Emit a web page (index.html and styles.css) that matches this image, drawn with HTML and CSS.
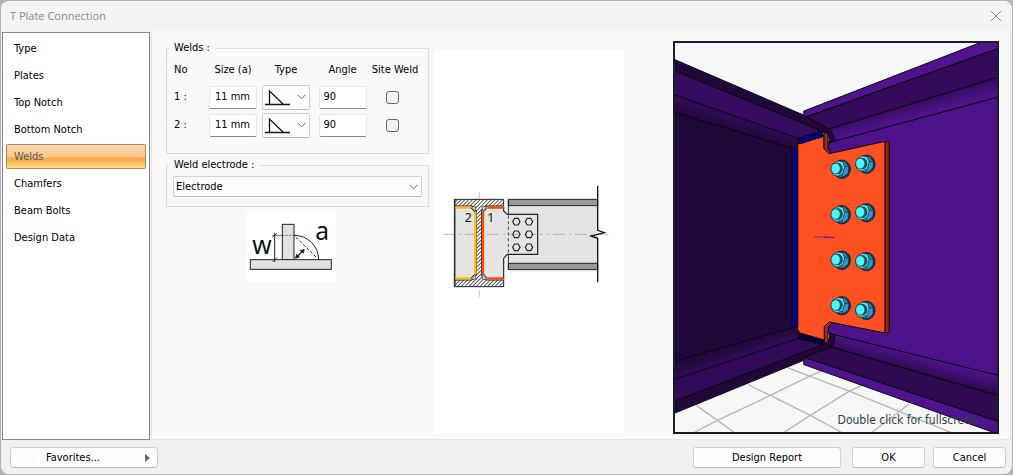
FILE: index.html
```html
<!DOCTYPE html>
<html lang="en">
<head>
<meta charset="utf-8">
<title>T Plate Connection</title>
<link rel="stylesheet" href="styles.css">
</head>
<body>
<div class="dialog">
  <header class="titlebar">
    <h1 class="title">T Plate Connection</h1>
    <button class="close" type="button" aria-label="Close">
      <svg width="12" height="12" viewBox="0 0 12 12"><path d="M1 1L11 11M11 1L1 11"/></svg>
    </button>
  </header>
  <div class="main">
    <nav class="sidebar">
      <button class="tab" type="button">Type</button>
      <button class="tab" type="button">Plates</button>
      <button class="tab" type="button">Top Notch</button>
      <button class="tab" type="button">Bottom Notch</button>
      <button class="tab tab-active" type="button" aria-current="page">Welds</button>
      <button class="tab" type="button">Chamfers</button>
      <button class="tab" type="button">Beam Bolts</button>
      <button class="tab" type="button">Design Data</button>
    </nav>
    <main class="panel">
      <form class="form">
        <fieldset class="group group-welds">
          <legend>Welds :</legend>
          <table class="welds">
            <colgroup><col class="c-no"><col class="c-size"><col class="c-type"><col class="c-angle"><col class="c-site"></colgroup>
            <thead>
              <tr><th class="left">No</th><th>Size (a)</th><th>Type</th><th>Angle</th><th>Site Weld</th></tr>
            </thead>
            <tbody>
              <tr>
                <td class="left">1 :</td>
                <td><input class="field size" type="text" value="11 mm" aria-label="Weld 1 size"></td>
                <td><div class="pick">
                  <select aria-label="Weld 1 type"><option label=" "></option></select>
                  <svg class="weld-icon" width="26" height="18" viewBox="0 0 26 18"><path d="M0 16.500H25M4.500 17V3L18 16"/></svg>
                  <svg class="chevron" width="9" height="6" viewBox="0 0 9 6"><path d="M.5 .8L4.500 4.800L8.500 .8"/></svg>
                </div></td>
                <td><input class="field" type="text" value="90" aria-label="Weld 1 angle"></td>
                <td><input class="check" type="checkbox" aria-label="Weld 1 site weld"></td>
              </tr>
              <tr>
                <td class="left">2 :</td>
                <td><input class="field size" type="text" value="11 mm" aria-label="Weld 2 size"></td>
                <td><div class="pick">
                  <select aria-label="Weld 2 type"><option label=" "></option></select>
                  <svg class="weld-icon" width="26" height="18" viewBox="0 0 26 18"><path d="M0 16.500H25M4.500 17V3L18 16"/></svg>
                  <svg class="chevron" width="9" height="6" viewBox="0 0 9 6"><path d="M.5 .8L4.500 4.800L8.500 .8"/></svg>
                </div></td>
                <td><input class="field" type="text" value="90" aria-label="Weld 2 angle"></td>
                <td><input class="check" type="checkbox" aria-label="Weld 2 site weld"></td>
              </tr>
            </tbody>
          </table>
        </fieldset>
        <fieldset class="group">
          <legend>Weld electrode :</legend>
          <div class="pick pick-wide">
            <select aria-label="Weld electrode"><option>Electrode</option></select>
            <svg class="chevron" width="9" height="6" viewBox="0 0 9 6"><path d="M.5 .8L4.500 4.800L8.500 .8"/></svg>
          </div>
        </fieldset>
        <svg class="throat" width="90" height="70" viewBox="15 21 270 210">
          <rect x="15" y="21" width="270" height="210" fill="#fff"/>
          <g fill="#e2e2e2" stroke="#222" stroke-width="3">
            <rect x="124" y="58" width="35" height="106"/>
            <rect x="28" y="164" width="243" height="29"/>
          </g>
          <g fill="none" stroke="#222" stroke-width="3">
            <path d="M159 91A73 73 0 0 1 233 164"/>
            <path d="M165 97L229 160" stroke-dasharray="9 6"/>
            <path d="M164 159L189 134" stroke-width="4"/>
            <path d="M101 84V171M95 97L107 85M95 170L107 158"/>
            <path d="M93 91H124" stroke-width="2"/>
            <path d="M124 91H159" stroke-width="2" stroke-dasharray="6 4"/>
          </g>
          <path d="M162 161L166 146L177 157ZM191 132L187 147L176 136Z" fill="#222"/>
          <text x="34" y="146" font-size="74">w</text>
          <text x="223" y="104" font-size="74">a</text>
        </svg>
      </form>
      <div class="plan">
        <svg width="190" height="384" viewBox="-3 -390 570 1152">
          <defs>
            <pattern id="hatch" width="8" height="8" patternUnits="userSpaceOnUse" patternTransform="rotate(45)">
              <rect width="8" height="8" fill="#fff"/><path d="M1 0V8" stroke="#222" stroke-width="2.500"/>
            </pattern>
          </defs>
          <path d="M133 36V356" stroke="#aaa" stroke-width="2" stroke-dasharray="22 8 4 8"/>
          <rect x="59" y="78" width="147" height="222" fill="#e4e4e4"/>
          <rect x="220" y="58" width="268" height="211" fill="#e4e4e4"/>
          <path d="M220 58H488V77H220ZM220 250H488V269H220Z" fill="#999" stroke="#222" stroke-width="3"/>
          <path d="M220 58V103M220 223V269" stroke="#222" stroke-width="3"/>
          <path d="M206 82V93L217 103H308V223H217L206 235V297L140 297V82Z" fill="#e4e4e4"/>
          <path d="M206 80V93L217 103H308V223H217L206 235V298" fill="none" stroke="#222" stroke-width="3.500"/>
          <path d="M220 106V222" stroke="#333" stroke-width="2.500" stroke-dasharray="10 7"/>
          <path d="M24 163H520" stroke="#999" stroke-width="2" stroke-dasharray="36 12 6 12"/>
          <path d="M59 58H206V78H152L140 92V286L152 300H206V320H59V300H112L124 286V92L112 78H59Z" fill="url(#hatch)" stroke="#222" stroke-width="3"/>
          <path d="M109 80L122 94V80ZM142 80V94L156 80ZM109 298L122 284V298ZM142 298V284L156 298Z" fill="#e4e4e4" stroke="#222" stroke-width="2"/>
          <path d="M59 58V320" stroke="#333" stroke-width="5"/>
          <path d="M107 83L121 97M121 281L107 295M158 83L144 97M144 281L158 295" fill="none" stroke="#222" stroke-width="3"/>
          <path d="M61 83H107M121 96V283M61 295H107" stroke="#ffc000" stroke-width="7"/>
          <path d="M206 83H158M144 96V283M158 295H206" stroke="#ff4b00" stroke-width="7"/>
          <g fill="none" stroke="#222" stroke-width="3.500">
            <path id="hex" d="M233 125L238.500 115H249.500L255 125L249.500 135H238.500Z"/>
            <use href="#hex" x="38"/><use href="#hex" y="38"/><use href="#hex" x="38" y="38"/><use href="#hex" y="77"/><use href="#hex" x="38" y="77"/>
          </g>
          <path d="M488 18V151L508 158L468 168L488 175V307" fill="none" stroke="#111" stroke-width="4"/>
          <text x="89" y="126" font-size="37">2</text>
          <text x="157" y="126" font-size="37">1</text>
        </svg>
      </div>
      <div class="view">
        <svg class="scene" viewBox="15 22 970 1171" preserveAspectRatio="xMidYMid slice">
          <defs>
            <linearGradient id="gTL" gradientUnits="userSpaceOnUse" x1="200" y1="235" x2="184" y2="288"><stop offset="0" stop-color="#340c5c"/><stop offset="1" stop-color="#200838"/></linearGradient>
            <linearGradient id="gTR" gradientUnits="userSpaceOnUse" x1="730" y1="204" x2="744" y2="254"><stop offset="0" stop-color="#380c62"/><stop offset=".8" stop-color="#4d138b"/></linearGradient>
            <linearGradient id="gBL" gradientUnits="userSpaceOnUse" x1="190" y1="928" x2="206" y2="976"><stop offset="0" stop-color="#200838"/><stop offset="1" stop-color="#340c5c"/></linearGradient>
            <linearGradient id="gBR" gradientUnits="userSpaceOnUse" x1="740" y1="961" x2="728" y2="1006"><stop offset="0" stop-color="#4d138b"/><stop offset="1" stop-color="#300b54"/></linearGradient>
            <g id="bolt" stroke="#06202c" stroke-width="2" stroke-linejoin="round">
              <ellipse cx="5" cy="0" rx="26" ry="28" fill="#0f4358"/>
              <path d="M-6 -26L14 -24L26 -7L24 12L8 25L-10 22Z" fill="#2a86b4"/>
              <path d="M10 -8L26 -7L24 12L8 25L4 14Z" fill="#3594d2"/>
              <path d="M-23 -17L-6 -25L8 -22L13 -6L7 14L-8 21L-22 17L-29 2Z" fill="#5fe6e6"/>
              <ellipse cx="-6" cy="-2" rx="12" ry="16" fill="#15606f"/>
              <ellipse cx="-14" cy="-2" rx="14" ry="16" fill="#4df6fa"/>
            </g>
          </defs>
          <rect x="0" y="0" width="1000" height="1200" fill="#f7f7f7"/>
          <path d="M350 998L420 1025L540 1070L850 1196M235 1050L302 1083L423 1143L520 1196M78 1112L143 1158L196 1196M70 1196L143 1158L302 1083L420 1025L470 1003M340 1196L423 1143L540 1070L600 1042M606 1196L720 1108" fill="none" stroke="#b5b8b5" stroke-width="4"/>
          <g stroke="#0a0512" stroke-width="3" stroke-linejoin="round">
            <path d="M10 229L375 340H366V878L375 878L10 982Z" fill="#200838"/>
            <path d="M478 322L990 184V1024L478 896Z" fill="#4d128a"/>
            <path d="M403 227L936 20H990V38L403 247Z" fill="#4f148d"/>
            <path d="M403 247L990 38V125L475 282Z" fill="#340b5b"/>
            <path d="M475 282L990 125V184L478 322L495 310Z" fill="url(#gTR)"/>
            <path d="M10 103L465 290L390 312L10 177Z" fill="#350c60"/>
            <path d="M10 177L390 310L385 335L375 340L10 230Z" fill="url(#gTL)"/>
            <path d="M10 70L400 238L475 279Q494 290 495 319L478 322Q485 302 465 290L10 103Z" fill="#200838"/>
            <path d="M480 896L990 1023V1084L485 937L495 910Z" fill="url(#gBR)"/>
            <path d="M485 937L990 1084V1162L403 968Z" fill="#2e0a51"/>
            <path d="M403 968L990 1162V1200L403 990Z" fill="#4f148d"/>
            <path d="M10 981L375 878H392V912L10 1036Z" fill="url(#gBL)"/>
            <path d="M10 1036L385 912L465 930L10 1102Z" fill="#310b57"/>
            <path d="M10 1102L465 928Q484 917 480 897L495 901Q500 926 484 937L403 968V977L10 1138Z" fill="#200838"/>
            <path d="M366 340H385V878H366Z" fill="#000084"/>
            <path d="M385 325L464 303V340L480 355L648 318V895L480 862L465 875V918L385 895L390 893L381 878H385Z" fill="#ff5021"/>
            <path d="M648 318L660 321V892L648 895Z" fill="#9c260b"/>
            <path d="M464 292L476 294V341L486 353L480 355L464 340ZM465 875L480 862L487 865L476 879V922L465 928Z" fill="#a92b0c"/>
            <path d="M385 309L456 288L464 302L391 326Z" fill="#000084"/>
            <path d="M385 912L391 895L465 916L461 929Z" fill="#00003e"/>
          </g>
          <path d="M435 606H475" stroke="#8a1c70" stroke-width="3"/><path d="M465 607H495" stroke="#3517d0" stroke-width="3"/>
          <use href="#bolt" x="513" y="402"/><use href="#bolt" x="587" y="387"/>
          <use href="#bolt" x="513" y="539"/><use href="#bolt" x="587" y="533"/>
          <use href="#bolt" x="513" y="676"/><use href="#bolt" x="587" y="680"/>
          <use href="#bolt" x="513" y="813"/><use href="#bolt" x="587" y="827"/>
        </svg>
        <p class="hint">Double click for fullscreen.</p>
      </div>
    </main>
  </div>
  <footer class="footer">
    <button class="btn btn-wide btn-menu" type="button">Favorites...
      <svg class="arrow" width="5" height="8" viewBox="0 0 5 8"><path d="M0 0L5 4L0 8Z"/></svg>
    </button>
    <button class="btn btn-wide push" type="button">Design Report</button>
    <button class="btn btn-ok" type="button">OK</button>
    <button class="btn" type="button">Cancel</button>
  </footer>
</div>
</body>
</html>
```

FILE: styles.css
```css
* { box-sizing: border-box; }

body {
  margin: 0;
  padding: 1px;
  min-height: 100vh;
  display: flex;
  background: #b4b4b6;
  color: #000;
  font: 11px/14px "DejaVu Sans Condensed", "DejaVu Sans", "Noto Sans", sans-serif;
}

button, input, select { font: inherit; color: inherit; }

.dialog {
  flex: 1;
  display: flex;
  flex-direction: column;
  background: #f0f0f0;
  border-radius: 8px;
  overflow: hidden;
}

.titlebar {
  height: 30px;
  display: flex;
  align-items: center;
  justify-content: space-between;
  padding: 0 10px 0 9px;
  background: #f3f3f3;
}

.title {
  margin: 0;
  color: #8a8a8a;
  font: 11px/16px "Open Sans", "Noto Sans", sans-serif;
}

.close {
  display: flex;
  padding: 0;
  border: 0;
  background: none;
}

.close path { stroke: #8c8c8c; fill: none; }

.main { flex: 1; display: flex; }

.sidebar {
  width: 148px;
  margin: 1px 1px 0;
  padding: 3px;
  display: flex;
  flex-direction: column;
  gap: 2px;
  background: #fff;
  border: 1px solid #828790;
}

.tab {
  height: 25px;
  padding: 0 7px;
  border: 1px solid transparent;
  border-radius: 2px;
  background: none;
  text-align: left;
}

.tab-active {
  color: #5a5a5a;
  border-color: #b08a50;
  background: linear-gradient(#fad9b4 0, #fbc68a 52%, #f6a53f 56%, #fde08a 100%);
}

.panel {
  flex: 1;
  display: flex;
  background: #f9f9f9;
  border: solid #e5e5e5;
  border-width: 0 1px 1px;
  margin-right: 1px;
  padding: 10px 11px 5px 14px;
}

.form {
  width: 263px;
  display: flex;
  flex-direction: column;
  gap: 4px;
}

.group {
  min-width: 0;
  margin: 0;
  padding: 4px 6px 9px;
  border: 1px solid #dcdcdc;
}

.group-welds { padding: 8px 0 14px 7px; }

legend { margin-left: -4px; padding: 0 5px; }
.group-welds legend { margin-left: -5px; }

.welds { table-layout: fixed; width: 245px; border-collapse: collapse; }
.c-no { width: 34px; }
.c-size { width: 50px; }
.c-type { width: 56px; }
.c-angle { width: 57px; }
.c-site { width: 48px; }
.welds th { height: 20px; padding: 0; font-weight: normal; text-align: center; vertical-align: top; white-space: nowrap; }
.welds td { height: 28px; padding: 0; text-align: center; }
.welds .left { text-align: left; }

.field {
  display: block;
  width: 48px;
  height: 23px;
  margin: 0 auto;
  padding: 0 4px 2px;
  background: #fff;
  border: 1px solid #e6e6e6;
  border-bottom-color: #868686;
  border-radius: 2px;
}
.size { padding-left: 5px; }

.check {
  appearance: none;
  display: block;
  width: 13px;
  height: 13px;
  margin: 0 15px;
  background: #f3f3f3;
  border: 1px solid #666;
  border-radius: 3px;
}

.pick { position: relative; width: 48px; height: 25px; margin: 0 auto; }
.pick select {
  appearance: none;
  display: block;
  width: 100%;
  height: 100%;
  padding: 0 2px;
  background: #fdfdfd;
  border: 1px solid #d0d0d0;
  border-bottom-color: #bbb;
  border-radius: 2px;
}
.pick-wide { width: 100%; height: 21px; }
.weld-icon { position: absolute; left: 3px; bottom: 4px; pointer-events: none; }
.weld-icon path { fill: none; stroke: #151515; stroke-width: 1.300; }
.chevron { position: absolute; right: 4px; top: 50%; margin-top: -3px; pointer-events: none; }
.chevron path { fill: none; stroke: #666; }

.throat { display: block; align-self: center; margin: 1px 14px 0 0; }
.throat text, .plan text { font-family: "Noto Sans", sans-serif; fill: #111; }

.plan { margin: 9px 0 0 5px; width: 190px; }
.plan svg { display: block; background: #fff; }

.view {
  flex: 1;
  position: relative;
  margin-left: 49px;
  border: 2px solid #171b2b;
  overflow: hidden;
}
.scene { position: absolute; inset: 0; display: block; width: 100%; height: 100%; }
.hint {
  position: absolute;
  right: 16px;
  bottom: 5px;
  margin: 0;
  color: #27443f;
  font-size: 12px;
  white-space: nowrap;
}

.footer {
  height: 34px;
  display: flex;
  align-items: center;
  gap: 8px;
  padding: 1px 6px 0 9px;
}

.btn {
  position: relative;
  width: 73px;
  height: 21px;
  padding: 0;
  background: #fdfdfd;
  border: 1px solid #d0d0d0;
  border-bottom-color: #bbb;
  border-radius: 3px;
}
.btn-wide { width: 148px; }
.btn-menu { padding-right: 22px; }
.btn-ok { margin-left: 3px; }
.push { margin-left: auto; }
.arrow { position: absolute; right: 7px; top: 6px; fill: #666; }
```
